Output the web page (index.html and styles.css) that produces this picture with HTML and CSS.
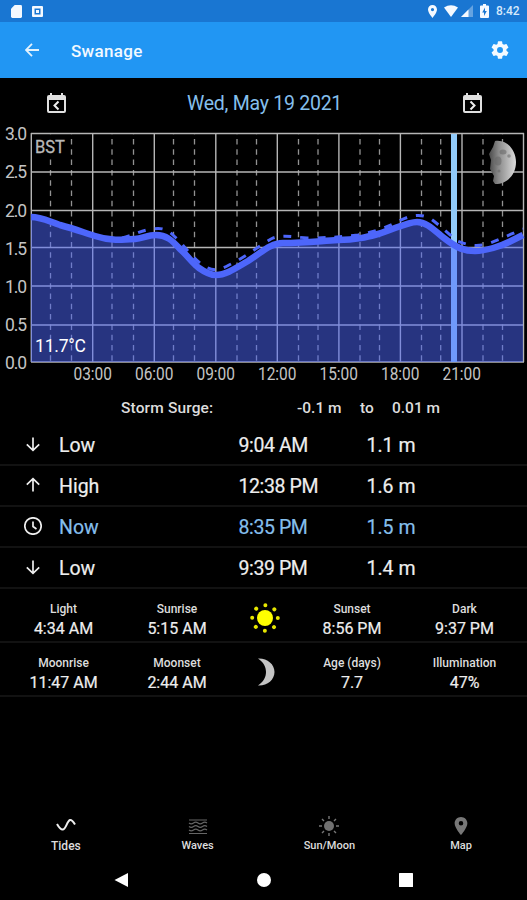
FILE: index.html
```html
<!DOCTYPE html>
<html lang="en">
<head>
<meta charset="utf-8">
<title>Swanage</title>
<link rel="stylesheet" href="styles.css">
</head>
<body>
<div class="status">
  <svg class="sd" viewBox="0 0 12 14"><path d="M4 0h6.500q1.500 0 1.500 1.500v11q0 1.500-1.500 1.500h-9Q0 14 0 12.500V4z"/></svg>
  <svg class="app" viewBox="0 0 11 11"><path fill-rule="evenodd" d="M1 0h9q1 0 1 1v9q0 1-1 1H1q-1 0-1-1V1q0-1 1-1zm1.500 2.500v6h6v-6zM4 4h3v3H4z"/></svg>
  <span class="spacer"></span>
  <svg class="pin" viewBox="5 2 14 20"><path d="M12 2C8.130 2 5 5.130 5 9c0 5.250 7 13 7 13s7-7.750 7-13c0-3.870-3.130-7-7-7zm0 9.500a2.500 2.500 0 0 1 0-5 2.500 2.500 0 0 1 0 5z"/></svg>
  <svg class="wifi" viewBox="0 0 14 12"><path d="M0 2.500Q7-2 14 2.500L7 12z"/></svg>
  <svg class="signal" viewBox="0 0 12 12"><path opacity=".35" d="M0 12 12 0v12z"/><path d="M0 12 7.500 4.500V12z"/></svg>
  <svg class="battery" viewBox="0 0 9 14"><path fill-rule="evenodd" d="M3 0h3v1.500h2q1 0 1 1V13q0 1-1 1H1q-1 0-1-1V2.500q0-1 1-1h2zm2 3.500L2.200 8.500H4V12l2.800-5H5z"/></svg>
  <span class="time">8:42</span>
</div>
<header class="appbar">
  <svg class="back" viewBox="0 0 14 14"><path d="M7 .8.900 7 7 13.200M1.200 7H14"/></svg>
  <h1>Swanage</h1>
  <svg class="gear" viewBox="2 2 20 20"><path d="M19.140 12.940c.04-.3.060-.61.060-.94s-.02-.64-.07-.94l2.030-1.580a.49.49 0 0 0 .12-.61l-1.920-3.320a.49.49 0 0 0-.59-.22l-2.390.96a7 7 0 0 0-1.620-.94l-.36-2.540a.48.48 0 0 0-.48-.41h-3.840a.47.47 0 0 0-.47.41l-.36 2.540c-.59.24-1.130.57-1.620.94l-2.390-.96a.48.48 0 0 0-.59.22L2.740 8.870c-.12.21-.08.47.12.61l2.030 1.580a6 6 0 0 0 0 1.880l-2.030 1.580a.49.49 0 0 0-.12.61l1.920 3.320c.12.22.37.29.59.22l2.390-.96c.5.38 1.030.7 1.620.94l.36 2.540c.05.24.24.41.48.41h3.840c.24 0 .44-.17.47-.41l.36-2.540a7 7 0 0 0 1.620-.94l2.390.96c.22.080.47 0 .59-.22l1.920-3.320a.47.47 0 0 0-.12-.61zM12 15.300a3.300 3.300 0 1 1 0-6.600 3.300 3.300 0 0 1 0 6.600z"/></svg>
</header>
<div class="datebar">
  <svg class="cal" viewBox="0 0 19 20"><path fill-rule="evenodd" d="M3 0h2v2h9V0h2v2h1q2 0 2 2v14q0 2-2 2H2q-2 0-2-2V4q0-2 2-2h1zM2 7v11h15V7z"/><path class="chev" d="m11.500 8.500-4 4 4 4"/></svg>
  <span class="date">Wed, May 19 2021</span>
  <svg class="cal" viewBox="0 0 19 20"><path fill-rule="evenodd" d="M3 0h2v2h9V0h2v2h1q2 0 2 2v14q0 2-2 2H2q-2 0-2-2V4q0-2 2-2h1zM2 7v11h15V7z"/><path class="chev" d="m7.500 8.500 4 4-4 4"/></svg>
</div>
<svg class="chart" viewBox="0 124 527 266">
  <defs>
    <linearGradient id="lune"><stop offset="0" stop-color="#4a4a4a"/><stop offset=".35" stop-color="#8a8a8a"/><stop offset="1" stop-color="#dcdcdc"/></linearGradient>
  </defs>
  <path class="dash" d="M50.500 134V362M71.500 134V362M112 134V362M133.500 134V362M173.500 134V362M194.500 134V362M237 134V362M256.500 134V362M298.500 134V362M318 134V362M360 134V362M379.500 134V362M421.500 134V362M440.700 134V362M483 134V362M502.500 134V362"/>
  <path class="grid" d="M31 133.500H524M31 172H524M31 210.500H524M31 247.500H524M31 286H524M31 325H524M31 362H524M31.300 133V362M92.700 133V362M154.300 133V362M215.800 133V362M277.300 133V362M338.900 133V362M400.400 133V362M462 133V362M523.500 133V362"/>
  <path class="nowline" d="M454 134V362"/>
  <path class="area" d="M31 217C42 217 50 222 60 225C75 229 85 233 95 236C110 241 122 240 135 239C143 238 148 235 156 235C166 235 172 240 180 249C188 256 192 263 199 268C206 273 211 275 216 275C226 275 236 268 248 261C262 252 271 243 283 243C305 243 320 241 338 240C356 240 367 237 378 234C395 229 407 222 417 222C429 222 437 234 448 241C458 248 464 251 475 251C486 251 501 246 509 242C515 239 519 237 523 235V362H31Z"/>
  <path class="surge" d="M122 238C134 235 140 231 149 229.500C158 228 165 227 173 235C185 246 193 259 204 266C212 271 219 271 229 265C244 258 259 246 271 239C281 234 293 237 307 238C325 238 340 237 358 235C374 232 388 227 399 221C411 215 421 213 431 219C443 228 451 236 457 241C468 245 475 247 487 244C499 240 511 234 523 229"/>
  <path class="curve" d="M31 217C42 217 50 222 60 225C75 229 85 233 95 236C110 241 122 240 135 239C143 238 148 235 156 235C166 235 172 240 180 249C188 256 192 263 199 268C206 273 211 275 216 275C226 275 236 268 248 261C262 252 271 243 283 243C305 243 320 241 338 240C356 240 367 237 378 234C395 229 407 222 417 222C429 222 437 234 448 241C458 248 464 251 475 251C486 251 501 246 509 242C515 239 519 237 523 235"/>
  <path fill="url(#lune)" d="M495 141C507 139 516 150 516 162S508 184 495 184L493 181 494 176 490 169 491 160 489 154 493 147z"/>
  <g fill="#666" opacity=".55"><ellipse cx="498" cy="161" rx="3.500" ry="4.500"/><ellipse cx="503" cy="152" rx="3.500" ry="2.500"/><circle cx="509" cy="156" r="1.800"/><circle cx="499" cy="171" r="1.500"/></g>
  <g class="axis">
    <text x="5" y="140" textLength="22">3.0</text><text x="5" y="178" textLength="22">2.5</text><text x="5" y="216.500" textLength="22">2.0</text><text x="5" y="254.500" textLength="22">1.5</text><text x="5" y="292.500" textLength="22">1.0</text><text x="5" y="331" textLength="22">0.5</text><text x="5" y="369" textLength="22">0.0</text>
  </g>
  <g class="axis">
    <text x="73.500" y="379.500" textLength="38.500" lengthAdjust="spacingAndGlyphs">03:00</text><text x="135" y="379.500" textLength="38.500" lengthAdjust="spacingAndGlyphs">06:00</text><text x="196.500" y="379.500" textLength="38.500" lengthAdjust="spacingAndGlyphs">09:00</text><text x="258" y="379.500" textLength="38.500" lengthAdjust="spacingAndGlyphs">12:00</text><text x="319.500" y="379.500" textLength="38.500" lengthAdjust="spacingAndGlyphs">15:00</text><text x="381" y="379.500" textLength="38.500" lengthAdjust="spacingAndGlyphs">18:00</text><text x="442.500" y="379.500" textLength="38.500" lengthAdjust="spacingAndGlyphs">21:00</text>
  </g>
  <path stroke="#000" stroke-width="3" d="M50.500 138V156"/>
  <text class="zone" x="35" y="152.500" textLength="30" lengthAdjust="spacingAndGlyphs">BST</text>
  <text class="temp" x="35" y="352" textLength="51">11.7°C</text>
</svg>
<div class="storm"><span class="wide">Storm Surge:</span><span>-0.1 m</span><span>to</span><span>0.01 m</span></div>
<div class="tides">
  <div class="tide"><svg viewBox="0 0 18 18"><path d="M9 2.500v13M2.800 9.300 9 15.300l6.200-6"/></svg><span>Low</span><span class="at">9:04 AM</span><span>1.1 m</span></div>
  <div class="tide"><svg viewBox="0 0 18 18"><path d="M9 15.500v-13M2.800 8.700 9 2.700l6.200 6"/></svg><span>High</span><span class="at">12:38 PM</span><span>1.6 m</span></div>
  <div class="tide now"><svg viewBox="0 0 18 18"><circle cx="9" cy="9" r="8.200"/><path d="M9 4.500V9.500l3.500 2.500"/></svg><span>Now</span><span class="at">8:35 PM</span><span>1.5 m</span></div>
  <div class="tide"><svg viewBox="0 0 18 18"><path d="M9 2.500v13M2.800 9.300 9 15.300l6.200-6"/></svg><span>Low</span><span class="at">9:39 PM</span><span>1.4 m</span></div>
</div>
<div class="sky">
  <div class="cell"><small>Light</small><b>4:34 AM</b></div>
  <div class="cell"><small>Sunrise</small><b>5:15 AM</b></div>
  <svg class="orb" viewBox="-16 -16 32 32"><circle r="8" fill="#ff0"/><circle r="12.800" class="rays"/></svg>
  <div class="cell"><small>Sunset</small><b>8:56 PM</b></div>
  <div class="cell"><small>Dark</small><b>9:37 PM</b></div>
</div>
<div class="sky">
  <div class="cell"><small>Moonrise</small><b>11:47 AM</b></div>
  <div class="cell"><small>Moonset</small><b>2:44 AM</b></div>
  <svg class="orb" viewBox="-16 -16 32 32"><path fill="#c4c4c4" d="M-7-13.500C2-14 9.500-8 9.500 0S2 14-7 13.500C-1.500 10 1 5 1 0S-1.500-10-7-13.500z"/></svg>
  <div class="cell"><small>Age (days)</small><b>7.7</b></div>
  <div class="cell"><small>Illumination</small><b>47%</b></div>
</div>
<nav class="tabs">
  <div class="tab active"><svg viewBox="0 0 20 20"><path class="line" d="M1 8c2 3.500 4 6 6 5.500C10 13 11 5 14 4c2-.5 3.500 2 5 4.500"/></svg><span>Tides</span></div>
  <div class="tab"><svg viewBox="0 0 20 20"><path class="line" d="M1 4h18M1 7q2.250 1.600 4.500 0t4.500 0 4.500 0 4.500 0M1 10.500q2.250 1.600 4.500 0t4.500 0 4.500 0 4.500 0M1 14q2.250 1.600 4.500 0t4.500 0 4.500 0 4.500 0M1 17.500h18"/></svg><span>Waves</span></div>
  <div class="tab"><svg viewBox="0 0 20 20"><circle cx="10" cy="10" r="5" fill="#707070"/><path class="line ray" d="M10 0v3M10 17v3M0 10h3M17 10h3M3 3l2 2M15 15l2 2M3 17l2-2M15 5l2-2"/></svg><span>Sun/Moon</span></div>
  <div class="tab"><svg viewBox="1 1 22 22"><path fill="#777" d="M12 2C8.130 2 5 5.130 5 9c0 5.250 7 13 7 13s7-7.750 7-13c0-3.870-3.130-7-7-7zm0 9.500a2.500 2.500 0 0 1 0-5 2.500 2.500 0 0 1 0 5z"/></svg><span>Map</span></div>
</nav>
<div class="system">
  <svg viewBox="0 0 14 14"><path d="M14 0v14L.5 7z"/></svg>
  <svg viewBox="0 0 14 14"><circle cx="7" cy="7" r="7"/></svg>
  <svg viewBox="0 0 14 14"><rect width="14" height="14" rx=".5"/></svg>
</div>
</body>
</html>
```

FILE: styles.css
```css
* { box-sizing: border-box; }
body {
  margin: 0;
  width: 527px;
  height: 900px;
  display: flex;
  flex-direction: column;
  overflow: hidden;
  background: #000;
  color: #eee;
  font-family: Roboto, "Liberation Sans", sans-serif;
}
body > * { flex-shrink: 0; }
svg { display: block; }
.status {
  height: 22px;
  padding: 0 6px 0 11px;
  display: flex;
  align-items: center;
  background: #1976d2;
  fill: #f4f9ff;
}
.sd { width: 11px; height: 13px; margin-right: 10px; }
.app { width: 11px; height: 11px; }
.spacer { flex: 1; }
.pin { width: 9px; height: 13px; margin-right: 7px; }
.wifi { width: 14px; height: 12px; margin-right: 3px; }
.signal { width: 12px; height: 12px; margin-right: 7px; }
.battery { width: 9px; height: 14px; margin-right: 7px; }
.time { font-size: 12px; font-weight: 500; width: 25px; color: #d6e9fb; }
.appbar {
  height: 56px;
  padding: 0 18px 0 25px;
  display: flex;
  align-items: center;
  background: #2196f3;
}
.back { width: 14px; height: 14px; fill: none; stroke: #e3f2fd; stroke-width: 1.8; }
.appbar h1 { flex: 1; margin: 1px 0 0 32px; font-size: 17px; font-weight: 500; letter-spacing: .3px; color: #f2f9ff; }
.gear { width: 18px; height: 18px; fill: #f4faff; }
.datebar {
  height: 46px;
  padding: 4px 45px 0 47px;
  display: flex;
  align-items: center;
  justify-content: space-between;
}
.cal { width: 19px; height: 20px; fill: #e0e0e0; }
.chev { fill: none; stroke: #eee; stroke-width: 2; }
.date { font-size: 19.500px; color: #85bfec; letter-spacing: -.25px; }
.chart { width: 527px; height: 266px; }
.grid { stroke: #b5b5b5; stroke-width: 1.4; fill: none; }
.dash { stroke: #929292; stroke-width: 1.3; stroke-dasharray: 5.500 4.800; stroke-dashoffset: -5; }
.nowline { stroke: #90caf9; stroke-width: 6; }
.area { fill: #4d68ff; fill-opacity: .5; }
.curve { fill: none; stroke: #4d66fb; stroke-width: 6.500; }
.surge { fill: none; stroke: #4d66fb; stroke-width: 3; stroke-dasharray: 8 9; }
.axis text { font-size: 17.500px; fill: #c4c4c4; }
.zone { font-size: 17.500px; fill: #b8b8b8; stroke: #b8b8b8; stroke-width: .3; }
.temp { font-size: 17.500px; fill: #fff; }
.storm {
  height: 35px;
  padding: 1px 0 0 121px;
  display: grid;
  grid-template-columns: 176px 63px 32px auto;
  align-items: center;
  font-size: 15.500px;
  font-weight: 500;
  color: #ddd;
}
.wide { letter-spacing: .15px; }
.tide {
  height: 41px;
  padding-left: 24px;
  display: grid;
  grid-template-columns: 35px 179.500px 128px auto;
  align-items: center;
  font-size: 19.500px;
  border-bottom: 2px solid #121212;
}
.tide svg { width: 18px; height: 18px; margin-bottom: 2px; fill: none; stroke: #eee; stroke-width: 1.7; }
.tide span { padding-top: 2px; -webkit-text-stroke: .2px; }
.tide .at { letter-spacing: -.4px; }
.now span { color: #85bfec; }
.sky {
  height: 54px;
  padding-top: 6px;
  display: grid;
  grid-template-columns: 127px 100px 75px 100px 125px;
  align-items: center;
  justify-items: center;
  border-bottom: 2px solid #121212;
}
.cell { display: flex; flex-direction: column; align-items: center; padding-top: 2px; }
.cell small { font-size: 12px; line-height: 18px; font-weight: 500; color: #ddd; }
.cell b { font-size: 16px; line-height: 21px; font-weight: 400; -webkit-text-stroke: .2px; }
.orb { width: 32px; height: 32px; }
.rays { fill: none; stroke: #e6e600; stroke-width: 3.400; stroke-linecap: round; stroke-dasharray: .01 10.043; }
.tabs {
  margin-top: auto;
  height: 43px;
  display: grid;
  grid-template-columns: repeat(4, 1fr);
}
.tab { display: flex; flex-direction: column; align-items: center; font-size: 11px; font-weight: 500; line-height: 16px; color: #ddd; }
.tab svg { width: 20px; height: 20px; margin-bottom: 2px; }
.active { font-size: 12px; }
.line { fill: none; stroke: #666; stroke-width: 1.2; }
.active .line { stroke: #eee; stroke-width: 2; }
.ray { stroke: #777; stroke-width: 1.4; }
.rays { stroke-width: 4; }
.system {
  height: 41px;
  padding: 0 114px;
  display: flex;
  align-items: center;
  justify-content: space-between;
  fill: #fff;
}
.system svg { width: 14px; height: 14px; }
```
